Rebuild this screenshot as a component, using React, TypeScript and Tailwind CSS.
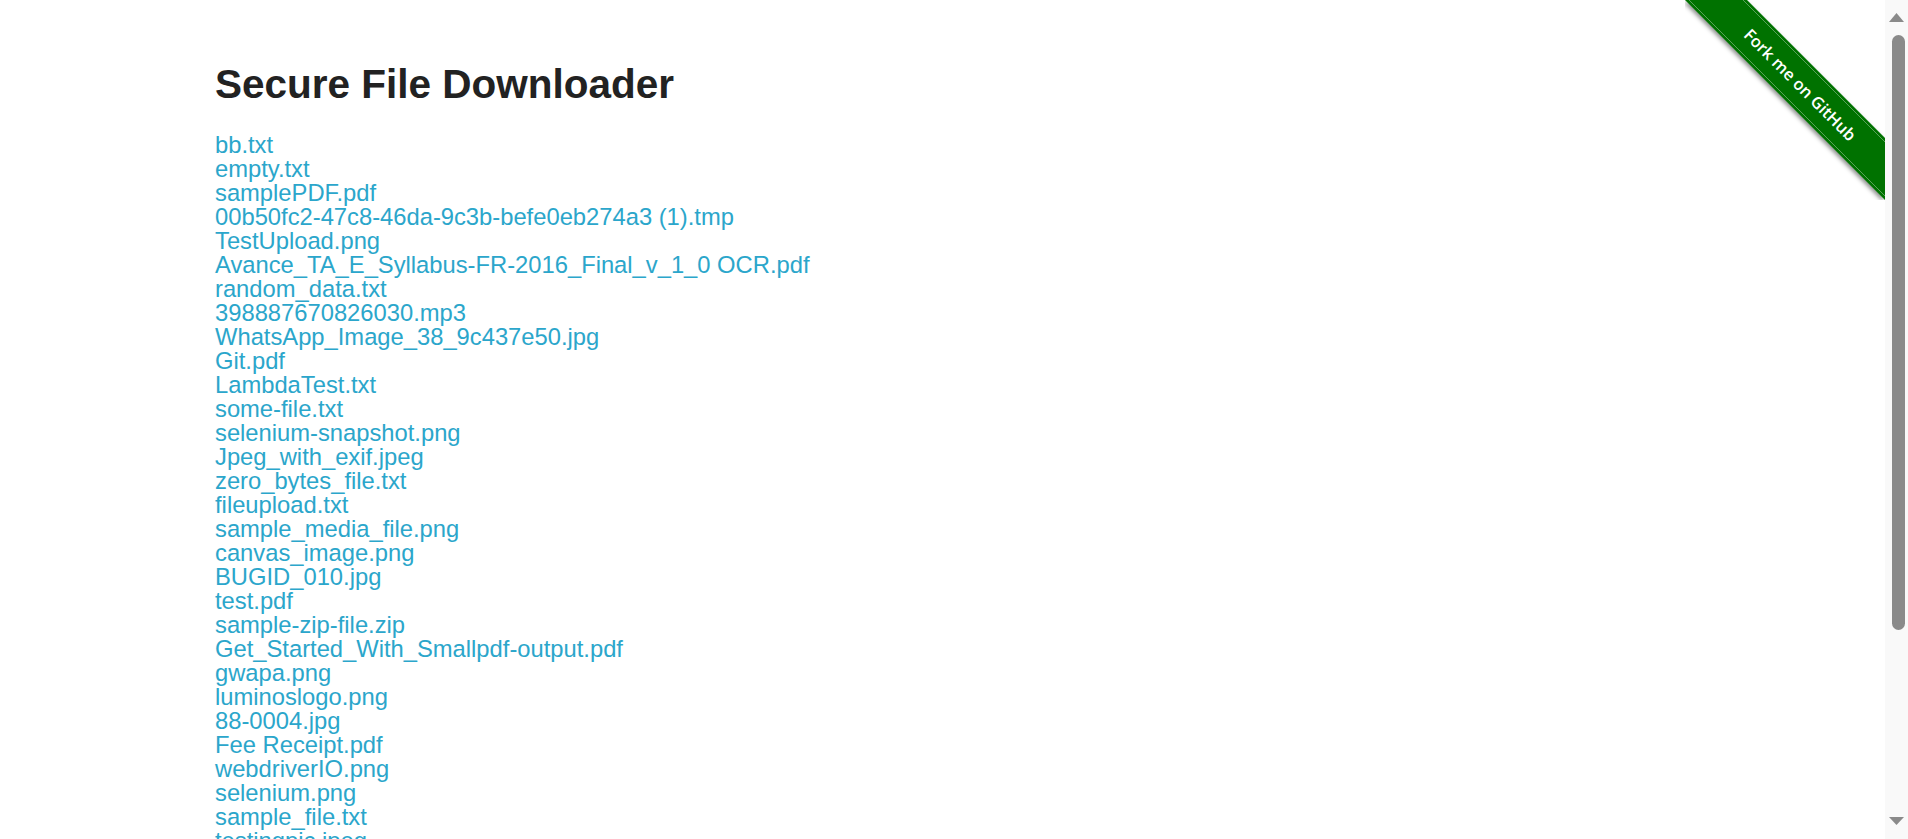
import React from 'react';

const files: string[] = [
  'bb.txt',
  'empty.txt',
  'samplePDF.pdf',
  '00b50fc2-47c8-46da-9c3b-befe0eb274a3 (1).tmp',
  'TestUpload.png',
  'Avance_TA_E_Syllabus-FR-2016_Final_v_1_0 OCR.pdf',
  'random_data.txt',
  '398887670826030.mp3',
  'WhatsApp_Image_38_9c437e50.jpg',
  'Git.pdf',
  'LambdaTest.txt',
  'some-file.txt',
  'selenium-snapshot.png',
  'Jpeg_with_exif.jpeg',
  'zero_bytes_file.txt',
  'fileupload.txt',
  'sample_media_file.png',
  'canvas_image.png',
  'BUGID_010.jpg',
  'test.pdf',
  'sample-zip-file.zip',
  'Get_Started_With_Smallpdf-output.pdf',
  'gwapa.png',
  'luminoslogo.png',
  '88-0004.jpg',
  'Fee Receipt.pdf',
  'webdriverIO.png',
  'selenium.png',
  'sample_file.txt',
  'testingpic.jpeg',
];

// "Fork me on GitHub" corner ribbon
function Ribbon(): React.ReactElement {
  return (
    <a href="#" className="absolute top-0 right-0 block w-[200px] h-[200px] overflow-hidden">
      <svg width="200" height="200" viewBox="0 0 200 200">
        <defs>
          <filter id="rb-shadow" x="-20%" y="-20%" width="140%" height="140%">
            <feDropShadow dx="-1.5" dy="2" stdDeviation="2" floodColor="#000" floodOpacity="0.45" />
          </filter>
        </defs>
        <polygon points="0,0 62,0 200,138 200,200" fill="#007200" filter="url(#rb-shadow)" />
        <line x1="4" y1="0" x2="200" y2="196" stroke="#ffffff" strokeOpacity="0.35" strokeWidth="1" />
        <line x1="58" y1="0" x2="200" y2="142" stroke="#ffffff" strokeOpacity="0.35" strokeWidth="1" />
        <text
          x="115.5"
          y="84.5"
          transform="rotate(45 115.5 84.5)"
          textAnchor="middle"
          dominantBaseline="central"
          fill="#ffffff"
          fontFamily="'Open Sans', 'DejaVu Sans', sans-serif"
          fontWeight="600"
          fontSize="16.5"
        >
          Fork me on GitHub
        </text>
      </svg>
    </a>
  );
}

function Scrollbar(): React.ReactElement {
  return (
    <div className="w-[23px] h-full bg-[#f9f9f9] flex flex-col items-center pt-[13px] pb-[14px] shrink-0">
      <svg width="15" height="9" viewBox="0 0 15 9">
        <polygon points="7.5,0 15,9 0,9" fill="#8a8a8a" />
      </svg>
      <div className="mt-[13px] w-[13px] h-[595px] rounded-full bg-[#8a8a8a] ml-[3px]" />
      <div className="flex-1" />
      <svg width="15" height="8" viewBox="0 0 15 8">
        <polygon points="0,0 15,0 7.5,8" fill="#8a8a8a" />
      </svg>
    </div>
  );
}

export default function App(): React.ReactElement {
  return (
    <div className="flex w-full h-screen overflow-hidden bg-white font-['Liberation_Sans',Arial,sans-serif]">
      <main className="relative flex-1 h-full overflow-hidden">
        <div className="pl-[215px] pt-[60px]">
          <h3 className="text-[40.5px] leading-[48px] font-bold text-[#222222] mb-[25px]">
            Secure File Downloader
          </h3>
          <div className="flex flex-col items-start">
            {files.map((f) => (
              <a key={f} href="#" className="text-[23.75px] leading-[24px] text-[#2ba6cb] whitespace-nowrap">
                {f}
              </a>
            ))}
          </div>
        </div>
        <Ribbon />
      </main>
      <Scrollbar />
    </div>
  );
}
